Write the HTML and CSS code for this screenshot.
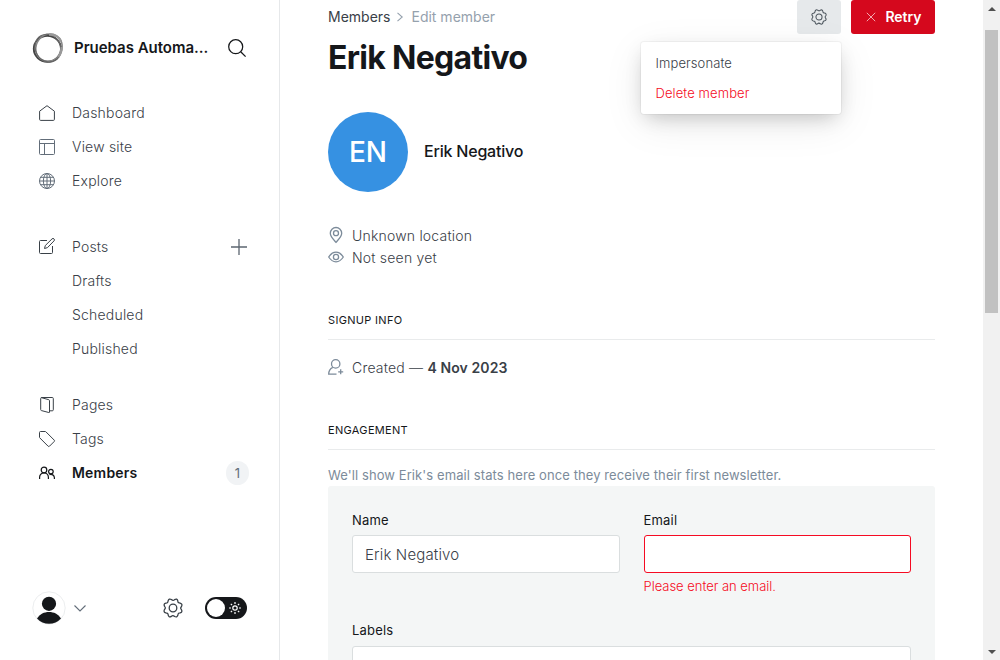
FILE: index.html
```html
<!DOCTYPE html>
<html lang="en">
<head>
<meta charset="utf-8">
<title>Edit member</title>
<link rel="stylesheet" href="styles.css">
</head>
<body>
<div class="app">
  <nav class="sidebar">
    <header class="site">
      <svg class="logo" viewBox="0 0 32 32" fill="none">
        <ellipse cx="15.400" cy="16.800" rx="13.600" ry="13" stroke="#444" stroke-width="1.900"/>
        <ellipse cx="17" cy="15.600" rx="12.800" ry="14" stroke="#888" stroke-width="1.500" transform="rotate(35 17 15.600)"/>
        <ellipse cx="16" cy="16.200" rx="12.600" ry="14.300" stroke="#666" stroke-width="1.200" transform="rotate(-30 16 16.200)"/>
        <path d="M17 2.600C22 2 27 4.500 29 9.500M29.800 15C29.600 19.500 28.300 22.500 26.300 25" stroke="#999" stroke-width="2.400"/>
      </svg>
      <span class="site-name">Pruebas Automa...</span>
      <svg class="search" viewBox="0 0 18 18" fill="none" stroke="#15171a" stroke-width="1.25"><circle cx="7.700" cy="7.700" r="7"/><path d="M12.700 12.700L17.600 17.600"/></svg>
    </header>

    <ul class="nav nav-main">
      <li class="item"><svg class="ico" viewBox="0 0 16 16"><path d="M.6 6.200L8 .700l7.400 5.500v8.200a1 1 0 0 1-1 1H1.600a1 1 0 0 1-1-1z"/></svg><span>Dashboard</span></li>
      <li class="item"><svg class="ico soft" viewBox="0 0 16 16"><rect x=".5" y=".5" width="15" height="15" rx="1"/><path d="M.5 4.500h15M5.500 4.500v11"/></svg><span>View site</span></li>
      <li class="item"><svg class="ico soft" viewBox="0 0 16 16"><circle cx="8" cy="8" r="7.500"/><ellipse cx="8" cy="8" rx="3.600" ry="7.500"/><path d="M8 .5v15M.5 8h15M1.800 4.300h12.400M1.800 11.700h12.400"/></svg><span>Explore</span></li>
    </ul>

    <ul class="nav nav-posts">
      <li class="item"><svg class="ico raised" viewBox="0 0 16 16"><path d="M8 2.500H1.500a1 1 0 0 0-1 1v11a1 1 0 0 0 1 1h11a1 1 0 0 0 1-1V8M5.500 10.500l.8-3L13 .900a1.300 1.300 0 0 1 2 2L8.500 9.600z"/></svg><span>Posts</span>
        <svg class="plus" viewBox="0 0 16 16"><path d="M8 0v16M0 8h16"/></svg></li>
      <li class="item sub">Drafts</li>
      <li class="item sub">Scheduled</li>
      <li class="item sub">Published</li>
    </ul>

    <ul class="nav nav-pages">
      <li class="item"><svg class="ico" viewBox="0 0 16 16"><path d="M2.200.600L9.800 2.700a1 1 0 0 1 .7 1V15a.5.500 0 0 1-.7.500L2.500 13.600a1 1 0 0 1-.8-1V1.500a1 1 0 0 1 1-1H13.300a1 1 0 0 1 1 1v11.300a1 1 0 0 1-1 1H10.500"/></svg><span>Pages</span></li>
      <li class="item"><svg class="ico" viewBox="0 0 16 16"><path d="M1.500.500H6.200a1 1 0 0 1 .7.300l8.300 8.300a1 1 0 0 1 0 1.400l-4.700 4.700a1 1 0 0 1-1.400 0L.8 6.900a1 1 0 0 1-.3-.7V1.500a1 1 0 0 1 1-1z"/></svg><span>Tags</span></li>
      <li class="item active"><svg class="ico" viewBox="0 0 16 16"><circle cx="5" cy="5" r="2.800"/><path d="M.6 13.900V12.300a4.400 4.400 0 0 1 8.800 0v1.600"/><circle cx="11.900" cy="6.600" r="2.300"/><path d="M10.500 9.600a3.500 3.500 0 0 1 4.900 3.200v1.100"/></svg><span>Members</span><b class="count">1</b></li>
    </ul>

    <footer class="foot">
      <svg class="user" viewBox="0 0 34 34"><circle cx="17" cy="17" r="16.200" fill="#fff" stroke="#e6e8ea" stroke-width=".8"/><circle cx="17" cy="12.800" r="7.100" fill="#15171a"/><path d="M5 27.500C8 23 12 21 17 21S26 23 29 27.500a16.200 16.200 0 0 1-24 0z" fill="#15171a"/></svg>
      <svg class="chev" viewBox="0 0 12 7"><path d="M.5.500L6 6L11.500.500"/></svg>
      <svg class="gear" viewBox="0 0 20 20"><circle cx="10" cy="10" r="3.800"/><path d="M8.270 1.600 Q10 -.6 11.730 1.600 Q12.500 3.600 14.720 2.720 Q17.500 2.500 17.280 5.280 Q16.400 7.500 18.400 8.270 Q20.600 10 18.400 11.730 Q16.400 12.500 17.280 14.720 Q17.500 17.500 14.720 17.280 Q12.500 16.400 11.730 18.400 Q10 20.600 8.270 18.400 Q7.500 16.400 5.280 17.280 Q2.500 17.500 2.720 14.720 Q3.600 12.500 1.600 11.730 Q-.6 10 1.600 8.270 Q3.600 7.500 2.720 5.280 Q2.500 2.500 5.280 2.720 Q7.500 3.600 8.270 1.600z" transform="rotate(22.500 10 10)"/></svg>
      <span class="toggle"><i class="knob"></i><svg class="sun" viewBox="0 0 12 12"><circle cx="6" cy="6" r="2.200"/><path d="M6 0v2M6 10v2M0 6h2M10 6h2M1.800 1.800l1.300 1.300M8.900 8.900l1.300 1.300M1.800 10.200l1.300-1.300M8.900 3.100l1.300-1.300"/></svg></span>
    </footer>
  </nav>

  <main class="main">
    <div class="top">
      <div class="crumbs"><span>Members</span><svg class="sep" viewBox="0 0 6 10"><path d="M.5.800L5.200 5L.5 9.200"/></svg><span class="current">Edit member</span></div>
      <div class="actions">
        <div class="btn-gear">
          <svg class="gear small" viewBox="0 0 20 20"><circle cx="10" cy="10" r="3.800"/><path d="M8.270 1.600 Q10 -.6 11.730 1.600 Q12.500 3.600 14.720 2.720 Q17.500 2.500 17.280 5.280 Q16.400 7.500 18.400 8.270 Q20.600 10 18.400 11.730 Q16.400 12.500 17.280 14.720 Q17.500 17.500 14.720 17.280 Q12.500 16.400 11.730 18.400 Q10 20.600 8.270 18.400 Q7.500 16.400 5.280 17.280 Q2.500 17.500 2.720 14.720 Q3.600 12.500 1.600 11.730 Q-.6 10 1.600 8.270 Q3.600 7.500 2.720 5.280 Q2.500 2.500 5.280 2.720 Q7.500 3.600 8.270 1.600z" transform="rotate(22.500 10 10)"/></svg>
          <div class="menu"><div>Impersonate</div><div class="danger">Delete member</div></div>
        </div>
        <div class="btn-retry"><svg class="x" viewBox="0 0 10 10"><path d="M.8.800l8.400 8.400M9.200.800L.8 9.200"/></svg><span>Retry</span></div>
      </div>
    </div>
    <h1 class="title"><span>Erik Negativo</span></h1>

    <div class="profile"><div class="avatar"><span>EN</span></div><span class="name">Erik Negativo</span></div>

    <div class="meta first"><svg class="mi raised" viewBox="0 0 16 16"><path d="M8 15.300C5.500 12.500 2.300 9.500 2.300 6.200a5.700 5.700 0 0 1 11.400 0c0 3.300-3.200 6.300-5.700 9.100z"/><circle cx="8" cy="6.200" r="2.500"/></svg><span>Unknown location</span></div>
    <div class="meta"><svg class="mi raised" viewBox="0 0 16 16"><path d="M.7 8C2.500 5.200 5 3.200 8 3.200S13.500 5.200 15.300 8C13.500 10.800 11 12.800 8 12.800S2.500 10.800.700 8z"/><circle cx="8" cy="8" r="2.600"/></svg><span>Not seen yet</span></div>

    <h2 class="section signup"><span>SIGNUP INFO</span></h2>
    <div class="meta created"><svg class="mi raised" viewBox="0 0 16 16"><circle cx="7.700" cy="4.900" r="4.200"/><path d="M4.800 8.300C2.200 9.500.700 11.500.700 15.200H8.500M12.700 10.300v5M10.200 12.800h5"/></svg><span>Created — <b>4 Nov 2023</b></span></div>

    <h2 class="section engage"><span>ENGAGEMENT</span></h2>
    <p class="note"><span>We'll show Erik's email stats here once they receive their first newsletter.</span></p>

    <section class="panel">
      <div class="field"><label>Name</label><div class="input">Erik Negativo</div></div>
      <div class="field"><label>Email</label><div class="input bad"></div><div class="error">Please enter an email.</div></div>
      <div class="field wide"><label>Labels</label><div class="input"></div></div>
    </section>
  </main>

  <div class="scrollbar"><i class="up"></i><i class="thumb"></i><i class="down"></i></div>
</div>
</body>
</html>
```
FILE: styles.css
```css
* { box-sizing: border-box; }
html, body { margin: 0; height: 660px; overflow: hidden; }
body { font: 400 14px/20px Inter, "Liberation Sans", sans-serif; letter-spacing: .2px; color: #15171a; background: #fff; }
svg { display: block; flex: none; overflow: visible; fill: none; }
ul { list-style: none; margin: 0; padding: 0; }
.app { display: flex; height: 660px; overflow: hidden; }

/* sidebar */
.sidebar { display: flex; flex-direction: column; width: 280px; flex: none; border-right: 1px solid #e6e8ea; }
.site { display: flex; align-items: center; height: 32px; margin: 32px 33px 32px 32px; }
.logo { width: 32px; height: 32px; }
.site-name { flex: 1; margin-left: 10px; font-size: 15px; font-weight: 600; letter-spacing: -.02px; white-space: nowrap; }
.search { width: 18px; height: 18px; }
.nav { padding: 0 30px 0 39px; }
.nav-posts { margin-top: 32px; }
.nav-pages { margin-top: 22px; }
.item { display: flex; align-items: center; gap: 17px; height: 34px; font-size: 14px; font-weight: 300; color: #394047; }
.sub { padding-left: 33px; }
.ico { width: 16px; height: 16px; stroke: #394047; stroke-width: 1; }
.soft { stroke: #626d79; }
.raised { margin-bottom: 2px; }
.plus { width: 16px; height: 16px; margin-left: auto; margin-right: 2px; stroke: #5c6670; stroke-width: 1.3; }
.active { font-weight: 600; color: #15171a; }
.active .ico { stroke: #15171a; stroke-width: 1.2; }
.count { display: flex; align-items: center; justify-content: center; width: 23px; height: 24px; margin-left: auto; border-radius: 12px; background: #f1f3f5; color: #626d79; font-size: 13px; font-weight: 400; }
.foot { display: flex; align-items: center; margin: auto 32px 35px; height: 34px; }
.user { width: 34px; height: 34px; }
.chev { width: 12px; height: 7px; margin-left: 8px; stroke: #626d79; stroke-width: 1.1; }
.gear { width: 20px; height: 20px; margin-left: 77px; stroke: #394047; stroke-width: 1.3; }
.toggle { display: flex; align-items: center; justify-content: space-between; width: 42px; height: 22px; margin-left: 22px; padding: 0 6px 0 2px; border-radius: 11px; background: #15171a; }
.knob { width: 18px; height: 18px; border-radius: 50%; background: #fff; }
.sun { width: 12px; height: 12px; stroke: #fff; stroke-width: 1.2; }

/* main column */
.main { flex: 1; min-width: 0; padding: 0 48px; }
.top { display: flex; justify-content: space-between; height: 34px; }
.crumbs { display: flex; align-items: center; font-weight: 400; letter-spacing: 0; color: #394047; }
.sep { width: 6px; height: 10px; margin: 0 8px 0 7px; stroke: #95a1ad; stroke-width: 1.1; }
.current { color: #95a1ad; }
.actions { display: flex; gap: 10px; }
.btn-gear { position: relative; display: flex; align-items: center; justify-content: center; width: 44px; height: 34px; border-radius: 3px; background: #e6e9eb; }
.small { width: 16px; height: 16px; margin: 0; stroke: #4b545c; }
.menu { position: absolute; top: 42px; right: 0; width: 200px; height: 72px; padding: 6px 14.500px; border-radius: 3px; background: #fff; box-shadow: 0 0 0 1px rgba(0,0,0,.04), 0 7px 20px -5px rgba(0,0,0,.22), 0 10px 40px rgba(0,0,0,.08); font-size: 13px; line-height: 30px; font-weight: 300; letter-spacing: .1px; color: #394047; white-space: nowrap; }
.danger { color: #f50b23; }
.btn-retry { display: flex; align-items: center; justify-content: center; gap: 9px; width: 84px; height: 34px; padding-left: 2px; border-radius: 3px; background: #d5081d; color: #fff; font-weight: 600; letter-spacing: 0; }
.x { width: 10px; height: 10px; stroke: #f4a6ae; stroke-width: 1; }
.title { margin: 4px 0 0; font-size: 32px; line-height: 40px; font-weight: 700; letter-spacing: -.7px; }
.profile { display: flex; align-items: center; gap: 16px; height: 80px; margin-top: 34px; }
.avatar { display: flex; align-items: center; justify-content: center; width: 80px; height: 80px; border-radius: 50%; background: #3691e2; color: #fff; font-size: 28px; font-weight: 500; letter-spacing: 0; }
.name { padding-bottom: 2px; font-size: 16px; font-weight: 500; letter-spacing: -.2px; }
.meta { display: flex; align-items: center; gap: 8px; height: 22px; font-weight: 300; color: #394047; }
.first { margin-top: 33px; }
.meta b { font-weight: 600; letter-spacing: .1px; }
.mi { width: 16px; height: 16px; stroke: #7c8b9a; stroke-width: 1.3; }
.section { margin: 0; padding-bottom: 7px; border-bottom: 1px solid #e9ebec; font-size: 11px; line-height: 24px; font-weight: 400; letter-spacing: .32px; }
.signup { margin-top: 39px; }
.created { margin-top: 17px; }
.engage { margin-top: 39px; }
.note { margin: 14px 0 0; font-size: 13px; line-height: 22px; font-weight: 400; letter-spacing: .09px; color: #7c8b9a; white-space: nowrap; }
.panel { display: grid; grid-template-columns: 1fr 1fr; gap: 0 24px; grid-template-rows: 110px auto; height: 320px; padding: 24px; border-radius: 3px; background: #f4f6f6; font-size: 13px; }
.field label { display: block; height: 25px; font-weight: 400; }
.wide { grid-column: 1 / 3; }
.wide label { height: 26px; }
.input { height: 38px; padding: 0 12px; border: 1px solid #dadedf; border-radius: 3px; background: #fff; font-size: 15px; line-height: 37px; font-weight: 300; letter-spacing: .15px; color: #394047; }
.bad { border-color: #f50b23; }
.error { margin-top: 3px; font-weight: 300; letter-spacing: -.02px; color: #f50b23; }

/* scrollbar */
.scrollbar { display: flex; flex-direction: column; align-items: center; width: 17px; flex: none; padding: 7px 0 6px; background: #f1f1f1; }
.up, .down { border: 4px solid transparent; }
.up { border-top: 0; border-bottom-color: #505050; }
.down { border-bottom: 0; border-top-color: #505050; margin-top: auto; }
.thumb { width: 13px; height: 283px; margin-top: 19px; background: #c1c1c1; }
```
